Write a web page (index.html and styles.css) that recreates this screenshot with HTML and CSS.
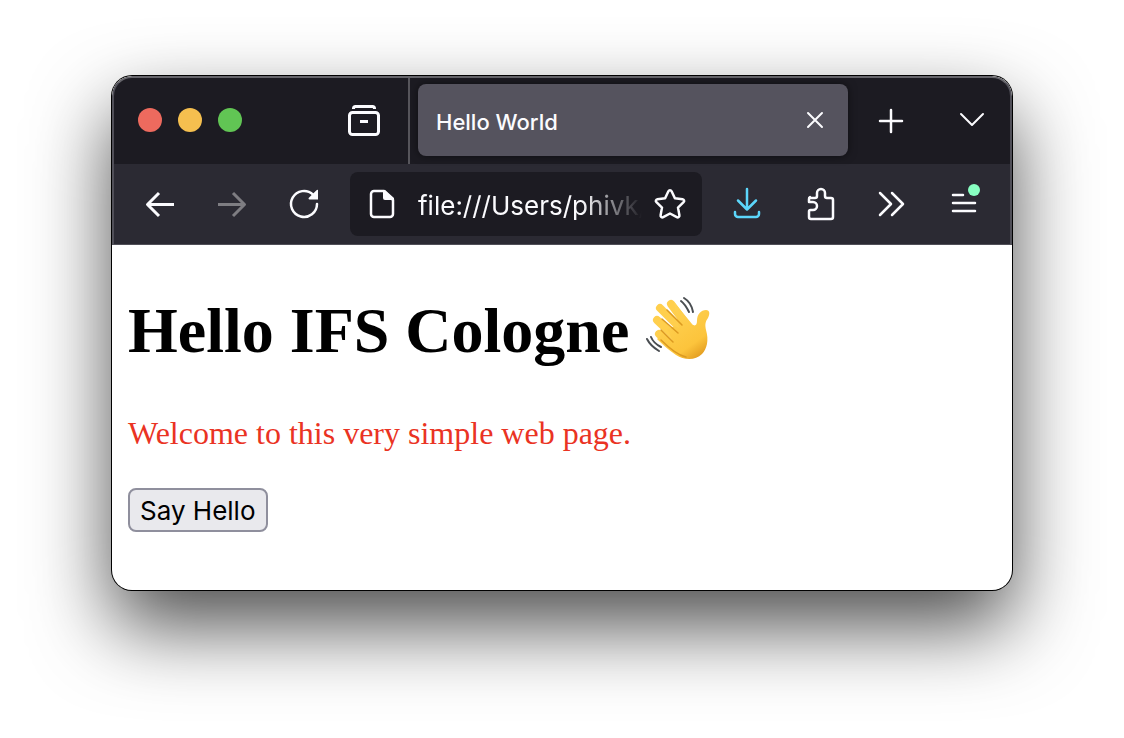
FILE: index.html
```html
<!DOCTYPE html>
<html lang="en">
<head>
    <meta charset="UTF-8">
    <meta name="viewport" content="width=device-width, initial-scale=1.0">
    <title>Hello World</title>
    <link rel="stylesheet" href="styles.css">
</head>
<body>
    <div class="window">
        <header class="chrome">
            <div class="tab-bar">
                <div class="window-side">
                    <div class="lights">
                        <button class="light close" aria-label="Close window"></button>
                        <button class="light minimize" aria-label="Minimize window"></button>
                        <button class="light zoom" aria-label="Zoom window"></button>
                    </div>
                    <button class="tool" aria-label="Firefox View">
                        <svg class="icon bold" viewBox="0 0 32 32">
                            <path stroke-linecap="butt" d="M5.5 5v-.5a2 2 0 0 1 2-2h17a2 2 0 0 1 2 2V5"/>
                            <rect x="1.5" y="8.5" width="29" height="22" rx="3"/>
                            <path stroke-linecap="butt" d="M12 17.5h8"/>
                        </svg>
                    </button>
                </div>
                <div class="tab">
                    <span class="tab-title">Hello World</span>
                    <button class="tab-close" aria-label="Close tab">
                        <svg class="icon thin" viewBox="0 0 32 32"><path d="M9 9l14 14M23 9L9 23"/></svg>
                    </button>
                </div>
                <div class="tab-tools">
                    <button class="tool" aria-label="New tab">
                        <svg class="icon" viewBox="0 0 32 32"><path d="M16 6v22M5 17h22"/></svg>
                    </button>
                    <button class="tool" aria-label="List all tabs">
                        <svg class="icon thin" viewBox="0 0 32 32"><path d="M5 10l11 11 11-11"/></svg>
                    </button>
                </div>
            </div>

            <div class="nav-bar">
                <button class="tool" aria-label="Back">
                    <svg class="icon bold" viewBox="0 0 32 32"><path stroke-linecap="butt" d="M30 16.500H4M15 5L3.500 16.500 15 28"/></svg>
                </button>
                <button class="tool" aria-label="Forward" disabled>
                    <svg class="icon bold" viewBox="0 0 32 32"><path stroke-linecap="butt" d="M2 16.500h26M17 5l11.500 11.500L17 28"/></svg>
                </button>
                <button class="tool" aria-label="Reload">
                    <svg class="icon" viewBox="0 0 32 32">
                        <path d="M29 16a13 13 0 1 1-4-9.400"/>
                        <path class="solid" d="M30 2v9.500h-8.500c-1 0-1.300-1-.6-1.700l7.600-7.500c.5-.5 1.500-.8 1.500-.3z"/>
                    </svg>
                </button>
                <div class="url-bar">
                    <svg class="icon" viewBox="0 0 32 32">
                        <path d="M8 3h10l9 9v14a3 3 0 0 1-3 3H8a3 3 0 0 1-3-3V6a3 3 0 0 1 3-3z"/>
                        <path class="solid" d="M17 2h2l9 8v2h-9a2 2 0 0 1-2-2z"/>
                    </svg>
                    <input class="url" type="text" aria-label="Address" value="file:///Users/phivk/index.html">
                    <button class="star" aria-label="Bookmark this page">
                        <svg class="icon" viewBox="0 0 32 32"><path d="M14.400 3.200c.7-1.400 2.500-1.400 3.200 0l3.300 7 7.700 1c1.500.2 2.100 2 1 3l-5.600 5.400 1.400 7.700c.3 1.500-1.300 2.600-2.600 1.900L16 25.500l-6.800 3.700c-1.300.7-2.900-.4-2.600-1.900L8 19.600l-5.600-5.400c-1.100-1-.5-2.800 1-3l7.700-1z"/></svg>
                    </button>
                </div>
                <button class="tool download" aria-label="Downloads">
                    <svg class="icon" viewBox="0 0 32 32"><path d="M15 1v20M6 12.500l9 9 9-9M3 24v2a3 3 0 0 0 3 3h18a3 3 0 0 0 3-3v-2"/></svg>
                </button>
                <button class="tool" aria-label="Extensions">
                    <svg class="icon" viewBox="0 0 32 32"><path d="M6 10h5a2 2 0 0 0 2-2V5a4 4 0 0 1 8 0v3a2 2 0 0 0 2 2h4a2 2 0 0 1 2 2v17a2 2 0 0 1-2 2H7a2 2 0 0 1-2-2v-5.500a1.500 1.500 0 0 1 1.500-1.500H9a4 4 0 0 0 0-8H5v-3a2 2 0 0 1 1-2z"/></svg>
                </button>
                <button class="tool" aria-label="More tools">
                    <svg class="icon" viewBox="0 0 32 32"><path d="M4 5l11 11L4 27M16 5l11 11-11 11"/></svg>
                </button>
                <button class="tool" aria-label="Open application menu">
                    <svg class="icon" viewBox="0 0 32 32"><path d="M5 7h10M5 15h22M5 23h22"/><circle class="dot" cx="26" cy="2" r="6"/></svg>
                </button>
            </div>
        </header>

        <main class="page">
            <h1>Hello IFS Cologne
                <svg class="wave" viewBox="0 0 66 66" role="img" aria-label="Waving hand">
                    <defs>
                        <linearGradient id="skin" gradientUnits="userSpaceOnUse" x1="18" y1="10" x2="58" y2="66">
                            <stop offset="0" stop-color="#ffd456"/>
                            <stop offset="0.700" stop-color="#fcc43c"/>
                            <stop offset="1" stop-color="#d98d15"/>
                        </linearGradient>
                    </defs>
                    <path class="fingers" d="M26 8l15 20M15 12l22 22M12 24l20 19M14 38l16 14"/>
                    <path fill="url(#skin)" d="M29 6l18 22c3 3 5 1 5-3 0-7 4-11 9-11 4 0 4 4 2 8-3 4-3 7-2 12 3 10 1 19-4 24-7 7-18 6-26 1-6-4-14-11-19-16l6-6 10 8-6-12 8-3 4 2-2-10z"/>
                    <path class="crease" d="M22 14l15 15M17 23l16 14M16 34l12 12M16 44c8 8 16 15 25 17"/>
                    <path class="motion" d="M36 5c4 3 6 7 8 11M39 2c5 3 8 8 9 14M2 43c3 6 7 9 12 12M6 41c2 5 6 8 10 10"/>
                </svg>
            </h1>
            <p>Welcome to this very simple web page.</p>
            <button class="hello" onclick="alert('Hello!')">Say Hello</button>
        </main>
    </div>
</body>
</html>
```
FILE: styles.css
```css
* {
    box-sizing: border-box;
}
body {
    margin: 0;
    padding: 76px 112px 148px;
    min-height: 100vh;
    display: flex;
    background-color: white;
    font-family: Inter, Arial, sans-serif;
}
button {
    font-family: inherit;
    cursor: pointer;
}
.window {
    flex: 1;
    min-width: 0;
    border-radius: 20px;
    overflow: hidden;
    background-color: white;
    box-shadow: 0 0 0 1px black, 0 36px 80px rgba(0, 0, 0, .7);
}
.chrome {
    border: 2px solid #504f58;
    border-top-color: #66656b;
    border-bottom: 1px solid #504f58;
    border-radius: 20px 20px 0 0;
    background-color: #1c1b22;
    color: #fbfbfe;
}

/* tabs */
.tab-bar {
    display: flex;
    height: 86px;
}
.window-side {
    display: flex;
    align-items: center;
    justify-content: space-between;
    width: 296px;
    padding: 0 12px 2px 24px;
    border-right: 2px solid #57565c;
}
.lights {
    display: flex;
    gap: 16px;
}
.light {
    width: 24px;
    height: 24px;
    padding: 0;
    border: none;
    border-radius: 50%;
}
.close {
    background-color: #ed6a5e;
}
.minimize {
    background-color: #f5bf4f;
}
.zoom {
    background-color: #61c554;
}
.tool {
    display: flex;
    flex: none;
    align-items: center;
    justify-content: center;
    width: 64px;
    height: 64px;
    padding: 0;
    border: none;
    background: none;
    color: inherit;
}
.tool:disabled {
    color: #7e7d82;
}
.icon {
    flex: none;
    display: block;
    width: 32px;
    height: 32px;
    overflow: visible;
    fill: none;
    stroke: currentColor;
    stroke-width: 2.5;
    stroke-linecap: round;
    stroke-linejoin: round;
}
.icon.thin {
    stroke-width: 2;
}
.icon.bold {
    stroke-width: 3;
}
.icon .solid {
    fill: currentColor;
    stroke: none;
}
.icon .dot {
    fill: #88ffc2;
    stroke: none;
}
.tab {
    flex: 1;
    min-width: 0;
    display: flex;
    align-items: center;
    justify-content: space-between;
    margin: 6px 0 8px 8px;
    padding: 0 17px 0 18px;
    border-radius: 8px;
    background-color: #55535e;
    box-shadow: 0 0 8px rgba(0, 0, 0, .5);
}
.tab-title {
    padding-top: 4px;
    font-size: 22px;
    font-weight: 500;
}
.tab-close {
    padding: 0;
    border: none;
    background: none;
    color: inherit;
}
.tab-tools {
    display: flex;
    align-items: center;
    gap: 17px;
    padding: 0 6px 2px 11px;
}

/* toolbar */
.nav-bar {
    display: flex;
    align-items: center;
    gap: 8px;
    height: 80px;
    padding: 0 14px;
    background-color: #2b2a33;
}
.url-bar {
    flex: 1;
    min-width: 0;
    display: flex;
    align-items: center;
    height: 64px;
    margin: 0 6px;
    padding: 0 16px;
    border-radius: 8px;
    background-color: #1c1b22;
}
.url {
    flex: 1;
    min-width: 0;
    margin: 0 12px 0 20px;
    padding: 2px 0 0;
    border: none;
    outline: none;
    background: none;
    color: inherit;
    font-family: inherit;
    font-size: 26px;
    -webkit-mask-image: linear-gradient(to left, transparent, black 60px);
    mask-image: linear-gradient(to left, transparent, black 60px);
}
.star {
    padding: 0;
    border: none;
    background: none;
    color: inherit;
}
.download {
    color: #5cd6fb;
}

/* page */
.page {
    padding: 48px 16px 16px;
    font-family: "Liberation Serif", "Times New Roman", serif;
    color: black;
}
h1 {
    margin: 0 0 45px;
    font-size: 64px;
    line-height: 76px;
}
.wave {
    width: 66px;
    height: 66px;
    vertical-align: -10px;
}
.fingers {
    fill: none;
    stroke: #ffcf4d;
    stroke-width: 8;
    stroke-linecap: round;
}
.crease {
    fill: none;
    stroke: #dc9a20;
    stroke-width: 1.5;
    stroke-linecap: round;
}
.motion {
    fill: none;
    stroke: #4a4e52;
    stroke-width: 2;
    stroke-linecap: round;
}
p {
    margin: 0 0 36px;
    font-size: 32px;
    line-height: 38px;
    color: #ea3323;
}
.hello {
    height: 44px;
    padding: 0 10px;
    border: 2px solid #8f8f9d;
    border-radius: 8px;
    background-color: #e9e9ed;
    color: black;
    font-family: Inter, Arial, sans-serif;
    font-size: 26px;
}
```
